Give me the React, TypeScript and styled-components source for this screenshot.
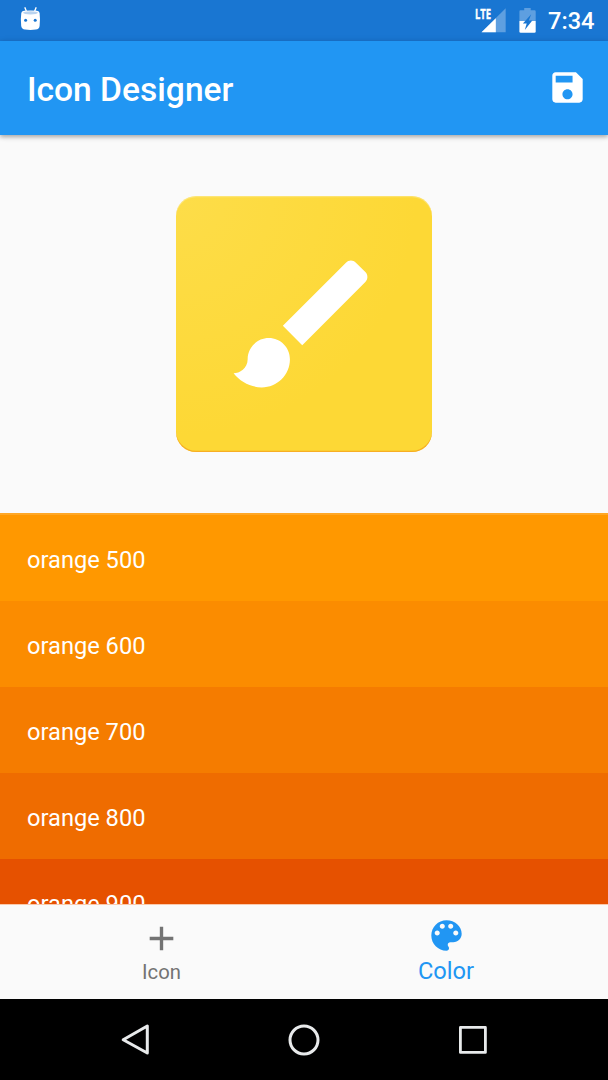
import React from 'react';
import styled, { createGlobalStyle } from 'styled-components';

const GlobalStyle = createGlobalStyle`
  * { box-sizing: border-box; }
  body { margin: 0; background: #000; font-family: Roboto, "Liberation Sans", sans-serif; }
`;

const Screen = styled.div`
  width: 608px;
  height: 1080px;
  display: flex;
  flex-direction: column;
  overflow: hidden;
  background: #fafafa;
`;

const StatusBar = styled.div`
  flex: 0 0 40.5px;
  display: flex;
  align-items: flex-start;
  justify-content: space-between;
  background: #1976d2;
  color: #fff;
`;

const StatusGroup = styled.div`
  display: flex;
  height: 40px;
`;

const Clock = styled.span`
  width: 60px;
  font-size: 23.6px;
  font-weight: 500;
  line-height: 43px;
  white-space: nowrap;
`;

const AppBar = styled.header`
  flex: 0 0 94.5px;
  display: flex;
  align-items: center;
  justify-content: space-between;
  padding: 0 20px 0 27px;
  background: #2196f3;
  color: #fff;
  z-index: 1;
  box-shadow: 0 2px 4px rgba(0, 0, 0, 0.26), 0 1px 7px rgba(0, 0, 0, 0.12);
`;

const Title = styled.h1`
  margin: 0;
  padding-top: 4px;
  font-size: 33.6px;
  font-weight: 500;
  line-height: 40px;
`;

const Preview = styled.main`
  flex: 0 0 378px;
  display: flex;
  align-items: flex-start;
  justify-content: center;
  padding-top: 61px;
`;

const Tile = styled.div`
  display: flex;
  align-items: center;
  justify-content: center;
  width: 256px;
  height: 256px;
  border-radius: 20px;
  background: radial-gradient(circle at 0 0, #fddd49 0, #fdd835 240px);
  box-shadow: inset 0 -1.3px 0 rgba(244, 160, 30, 0.75), inset 0 1.3px 0 rgba(255, 255, 255, 0.25);
`;

const SwatchList = styled.ul`
  flex: 0 0 391px;
  margin: 0;
  padding: 2px 0 0;
  overflow: hidden;
  list-style: none;
  box-shadow: inset 0 2px 0 #ffa726;
`;

const Swatch = styled.li<{ $color: string }>`
  height: 86.05px;
  padding: 4px 27px 0;
  background: ${({ $color }) => $color};
  color: #fff;
  font-size: 23.65px;
  line-height: 82px;
`;

const BottomNav = styled.nav`
  flex: 0 0 95px;
  display: flex;
  justify-content: center;
  border-top: 1px solid #fbc9ab;
  background: #fafafa;
`;

const NavTab = styled.div<{ $active?: boolean }>`
  width: 284px;
  display: flex;
  flex-direction: column;
  align-items: center;
  padding-top: ${({ $active }) => ($active ? 10 : 13)}px;
  padding-right: ${({ $active }) => ($active ? 0 : 1)}px;
  color: ${({ $active }) => ($active ? '#2196f3' : '#737373')};
  font-size: ${({ $active }) => ($active ? 23.65 : 20.27)}px;
  line-height: ${({ $active }) => ($active ? 30 : 26)}px;
`;

const SystemNav = styled.div`
  flex: 1;
  display: flex;
  justify-content: center;
  background: #000;
`;

const SystemButton = styled.div`
  width: 169px;
  display: flex;
  align-items: center;
  justify-content: center;
`;

const NetworkLabel = styled.text`
  font: 700 14.8px "Open Sans", Roboto, sans-serif;
`;

const MaterialIcon = ({ d }: { d: string }) => (
  <svg width="41" height="41" viewBox="-0.15 -0.15 24.3 24.3" fill="currentColor">
    <path d={d} />
  </svg>
);

const SAVE = 'M17 3H5c-1.11 0-2 .9-2 2v14c0 1.1.89 2 2 2h14c1.1 0 2-.9 2-2V7l-4-4zm-5 16c-1.66 0-3-1.34-3-3s1.34-3 3-3 3 1.34 3 3-1.34 3-3 3zm3-10H5V5h10v4z';
const BRUSH = 'M7 14c-1.66 0-3 1.34-3 3 0 1.31-1.16 2-2 2 .92 1.22 2.49 2 4 2 2.21 0 4-1.79 4-4 0-1.66-1.34-3-3-3zm13.71-9.37l-1.34-1.34c-.39-.39-1.02-.39-1.41 0L9 12.25 11.75 15l8.96-8.96c.39-.39.39-1.02 0-1.41z';
const ADD = 'M19 13h-6v6h-2v-6H5v-2h6V5h2v6h6v2z';
const PALETTE = 'M12 3c-4.97 0-9 4.03-9 9s4.03 9 9 9c.83 0 1.5-.67 1.5-1.5 0-.39-.15-.74-.39-1.01-.23-.26-.38-.61-.38-.99 0-.83.67-1.5 1.5-1.5H16c2.76 0 5-2.24 5-5 0-4.42-4.03-8-9-8zm-5.5 9c-.83 0-1.5-.67-1.5-1.5S5.67 9 6.5 9 8 9.67 8 10.5 7.33 12 6.5 12zm3-4C8.67 8 8 7.33 8 6.5S8.67 5 9.5 5s1.5.67 1.5 1.5S10.33 8 9.5 8zm5 0c-.83 0-1.5-.67-1.5-1.5S13.67 5 14.5 5s1.5.67 1.5 1.5S15.33 8 14.5 8zm3 4c-.83 0-1.5-.67-1.5-1.5S16.67 9 17.5 9s1.5.67 1.5 1.5-.67 1.5-1.5 1.5z';

const SWATCHES = [
  { name: 'orange 500', color: '#ff9800' },
  { name: 'orange 600', color: '#fb8c00' },
  { name: 'orange 700', color: '#f57c00' },
  { name: 'orange 800', color: '#ef6c00' },
  { name: 'orange 900', color: '#e65100' },
];

const DroidHead = () => (
  <svg width="60" height="40" viewBox="0 0 60 40">
    <path d="M25 7.8l1.7 4.4M36 7.8l-1.7 4.4" stroke="#fff" strokeWidth="1.4" strokeLinecap="round" />
    <path d="M21.3 13Q21.5 11 24 10.8Q30.5 10 37 10.8Q39.3 11 39.6 13Q40.4 19 39.6 26Q39.2 29.2 35.8 29.6Q30.5 30.2 25 29.6Q21.8 29.2 21.2 26Q20.4 19 21.3 13Z" fill="#fff" />
    <ellipse cx="30.5" cy="12.8" rx="7.5" ry="1.6" fill="#b9d3ef" />
    <circle cx="25.6" cy="20.3" r="1.5" fill="#1976d2" />
    <circle cx="35.2" cy="20.3" r="1.5" fill="#1976d2" />
  </svg>
);

const Signal = () => (
  <svg width="37" height="40" viewBox="0 0 37 40">
    <path d="M35.7 8.3V32.2H11.5Z" fill="#5e9fe0" />
    <path d="M25.8 18.2V32.2H11.5Z" fill="#fff" />
    <NetworkLabel x="0" y="18.9" fill="#fff" stroke="#fff" strokeWidth=".4" transform="translate(4.9 0) scale(.64 1)">LTE</NetworkLabel>
  </svg>
);

const Battery = () => (
  <svg width="41" height="40" viewBox="0 0 41 40">
    <path d="M13.5 10.3h3.7V8h6.5v2.3h3.9q1.1 0 1.1 1.1V21H12.4v-9.6q0-1.1 1.1-1.1Z" fill="#5e9fe0" />
    <path d="M12.4 21h16.3v10.4q0 1.3-1.3 1.3H13.7q-1.3 0-1.3-1.3Z" fill="#fff" />
    <path d="M24.2 14.2L15.9 23.4h3.8l-1.9 6.6L25.3 20.4h-3.5Z" fill="#1976d2" />
  </svg>
);

export default function App() {
  return (
    <>
      <GlobalStyle />
      <Screen>
        <StatusBar>
          <DroidHead />
          <StatusGroup>
            <Signal />
            <Battery />
            <Clock>7:34</Clock>
          </StatusGroup>
        </StatusBar>
        <AppBar>
          <Title>Icon Designer</Title>
          <MaterialIcon d={SAVE} />
        </AppBar>
        <Preview>
          <Tile>
            <svg width="170" height="170" viewBox="-0.07 -0.07 24.14 24.14" fill="#fff"><path d={BRUSH} /></svg>
          </Tile>
        </Preview>
        <SwatchList>
          {SWATCHES.map(({ name, color }) => <Swatch key={name} $color={color}>{name}</Swatch>)}
        </SwatchList>
        <BottomNav>
          <NavTab><MaterialIcon d={ADD} />Icon</NavTab>
          <NavTab $active><MaterialIcon d={PALETTE} />Color</NavTab>
        </BottomNav>
        <SystemNav>
          <SystemButton>
            <svg width="40" height="40" viewBox="0 0 40 40" fill="none" stroke="#e8eaeb" strokeWidth="3" strokeLinejoin="round"><path d="M32.3 6V33L8.2 19.8Z" /></svg>
          </SystemButton>
          <SystemButton>
            <svg width="40" height="40" viewBox="0 0 40 40" fill="none" stroke="#e8eaeb" strokeWidth="3"><circle cx="20" cy="20" r="14" /></svg>
          </SystemButton>
          <SystemButton>
            <svg width="40" height="40" viewBox="0 0 40 40" fill="none" stroke="#e8eaeb" strokeWidth="2.8" strokeLinejoin="round"><rect x="7.4" y="7.4" width="25" height="25" /></svg>
          </SystemButton>
        </SystemNav>
      </Screen>
    </>
  );
}
